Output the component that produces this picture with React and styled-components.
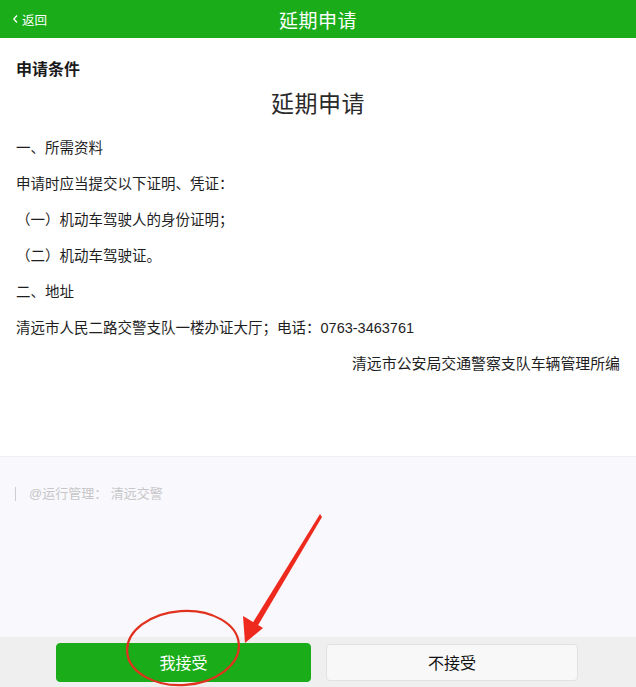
import React from "react";
import styled, { createGlobalStyle } from "styled-components";

const Global = createGlobalStyle`
  html, body { margin: 0; padding: 0; background: #ffffff; }
  body { font-family: "Liberation Sans", "Noto Sans CJK SC", sans-serif; }
  * { box-sizing: border-box; }
`;

const Page = styled.div`
  position: relative;
  width: 636px;
  height: 687px;
  display: flex;
  flex-direction: column;
  overflow: hidden;
`;

const Header = styled.header`
  height: 38px;
  flex: none;
  background: #1aad19;
  color: #ffffff;
  display: grid;
  grid-template-columns: 80px 1fr 80px;
  align-items: center;
`;

const Back = styled.div`
  display: flex;
  align-items: center;
  gap: 4px;
  padding-left: 12px;
  font-size: 12.5px;
`;

const Title = styled.h1`
  margin: 0;
  text-align: center;
  font-size: 19px;
  font-weight: normal;
  letter-spacing: 0.5px;
`;

const Content = styled.main`
  height: 418px;
  flex: none;
  padding: 15px 16px 0;
  background: #ffffff;
  color: #222222;
`;

const Heading = styled.h2`
  margin: 0;
  font-size: 16px;
  font-weight: bold;
  line-height: 34px;
  color: #1a1a1a;
`;

const DocTitle = styled.h3`
  margin: 0 0 7px;
  text-align: center;
  font-family: "Liberation Serif", "Noto Sans CJK SC", serif;
  font-weight: normal;
  font-size: 23px;
  line-height: 36px;
  color: #2a2a2a;
  letter-spacing: 0.5px;
`;

const Para = styled.p`
  margin: 0;
  font-size: ${(p) => (p.$right ? "14.9px" : "14.5px")};
  line-height: 36px;
  text-align: ${(p) => (p.$right ? "right" : "left")};
  color: #1e1e1e;
`;

const Lower = styled.section`
  flex: 1;
  background: #f9f8fc;
  border-top: 1px solid #efeef2;
  padding: 28px 15px 0;
`;

const Ops = styled.div`
  display: flex;
  align-items: center;
  gap: 13px;
  color: #c6c6c8;
  font-size: 13px;
  line-height: 18px;
`;

const Bar = styled.span`
  width: 1px;
  height: 14px;
  background: #cfcfd2;
`;

const Footer = styled.footer`
  height: 50px;
  flex: none;
  background: #efefef;
  display: grid;
  grid-template-columns: 255px 252px;
  justify-content: start;
  column-gap: 15px;
  align-items: center;
  padding-left: 56px;
`;

const Button = styled.button`
  height: ${(p) => (p.$primary ? "39px" : "37px")};
  border-radius: 4px;
  border: 1px solid ${(p) => (p.$primary ? "#1aad19" : "#e2e2e2")};
  background: ${(p) => (p.$primary ? "#1aad19" : "#f8f8f8")};
  color: ${(p) => (p.$primary ? "#ffffff" : "#111111")};
  font-family: inherit;
  font-size: 16px;
  padding: 0;
`;

const Annotation = styled.svg`
  position: absolute;
  left: 0;
  top: 0;
  width: 636px;
  height: 687px;
  pointer-events: none;
`;

export default function App() {
  return (
    <Page>
      <Global />
      <Header>
        <Back>
          <svg width="6" height="10" viewBox="0 0 6 10">
            <path d="M5 1.5 L1.8 5 L5 8.5" fill="none" stroke="#fff" strokeWidth="1.3" />
          </svg>
          <span>返回</span>
        </Back>
        <Title>延期申请</Title>
        <span />
      </Header>
      <Content>
        <Heading>申请条件</Heading>
        <DocTitle>延期申请</DocTitle>
        <Para>一、所需资料</Para>
        <Para>申请时应当提交以下证明、凭证：</Para>
        <Para>（一）机动车驾驶人的身份证明；</Para>
        <Para>（二）机动车驾驶证。</Para>
        <Para>二、地址</Para>
        <Para>清远市人民二路交警支队一楼办证大厅；电话：0763-3463761</Para>
        <Para $right>清远市公安局交通警察支队车辆管理所编</Para>
      </Content>
      <Lower>
        <Ops>
          <Bar />
          <span>@运行管理： 清远交警</span>
        </Ops>
      </Lower>
      <Footer>
        <Button $primary>我接受</Button>
        <Button>不接受</Button>
      </Footer>
      <Annotation viewBox="0 0 636 687">
        <ellipse cx="183" cy="648" rx="56" ry="37" fill="none" stroke="#e0321f" strokeWidth="2.2" transform="rotate(-4 183 648)" />
        <polygon points="320,514 322,517 257,627 252,624" fill="#ee2a1e" />
        <polygon points="245,643 243,616 263,628" fill="#ee2a1e" />
      </Annotation>
    </Page>
  );
}
